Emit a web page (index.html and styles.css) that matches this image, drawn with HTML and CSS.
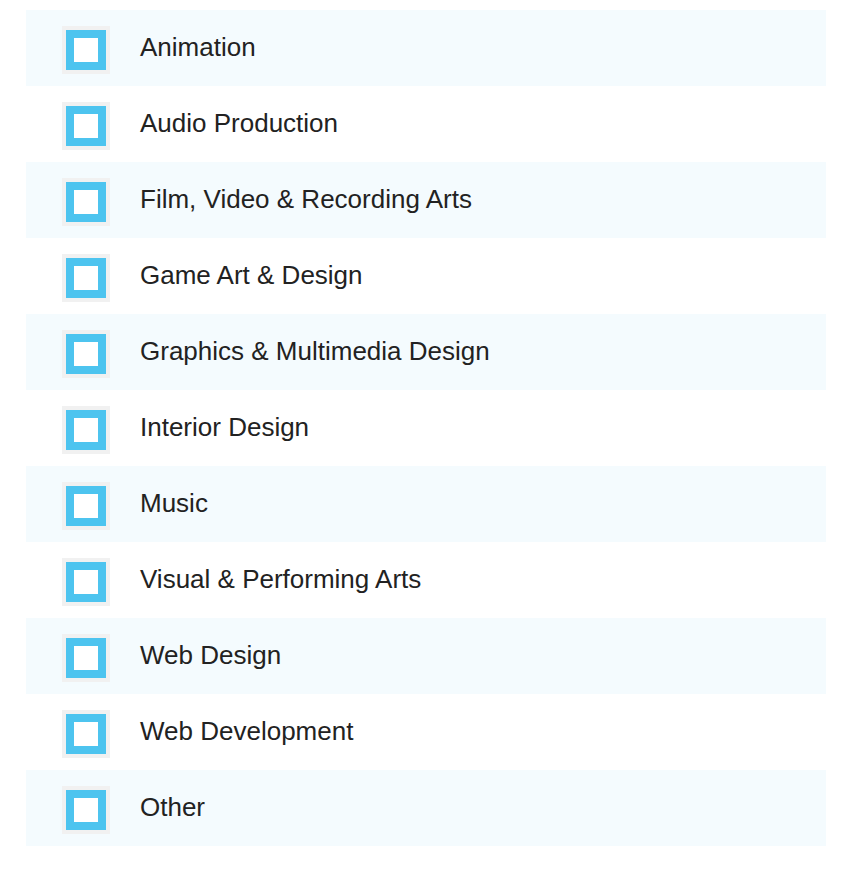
FILE: index.html
```html
<!DOCTYPE html>
<html lang="en">
<head>
<meta charset="utf-8">
<title>Programs</title>
<link rel="stylesheet" href="styles.css">
</head>
<body>
<ul class="list">
  <li class="row"><span class="check"><span class="box"></span></span><span class="label">Animation</span></li>
  <li class="row"><span class="check"><span class="box"></span></span><span class="label">Audio Production</span></li>
  <li class="row"><span class="check"><span class="box"></span></span><span class="label">Film, Video &amp; Recording Arts</span></li>
  <li class="row"><span class="check"><span class="box"></span></span><span class="label">Game Art &amp; Design</span></li>
  <li class="row"><span class="check"><span class="box"></span></span><span class="label">Graphics &amp; Multimedia Design</span></li>
  <li class="row"><span class="check"><span class="box"></span></span><span class="label">Interior Design</span></li>
  <li class="row"><span class="check"><span class="box"></span></span><span class="label">Music</span></li>
  <li class="row"><span class="check"><span class="box"></span></span><span class="label">Visual &amp; Performing Arts</span></li>
  <li class="row"><span class="check"><span class="box"></span></span><span class="label">Web Design</span></li>
  <li class="row"><span class="check"><span class="box"></span></span><span class="label">Web Development</span></li>
  <li class="row"><span class="check"><span class="box"></span></span><span class="label">Other</span></li>
</ul>
</body>
</html>
```
FILE: styles.css
```css
html, body {
  margin: 0;
  padding: 0;
  background: #ffffff;
}
body {
  font-family: "Liberation Sans", Arial, sans-serif;
  color: #222222;
}
.list {
  list-style: none;
  margin: 0;
  padding: 10px 34px 0 26px;
}
.row {
  display: flex;
  align-items: flex-start;
  height: 76px;
}
.row:nth-child(odd) {
  background: #f4fbfe;
}
.check {
  display: flex;
  align-items: center;
  justify-content: center;
  width: 48px;
  height: 48px;
  margin: 16px 0 0 36px;
  background: #f1f1f1;
  flex: none;
}
.box {
  box-sizing: border-box;
  width: 40px;
  height: 40px;
  border: 8px solid #4dc4ef;
  background: #ffffff;
}
.label {
  margin: 22px 0 0 30px;
  font-size: 26px;
  line-height: 30px;
  white-space: nowrap;
}
```
